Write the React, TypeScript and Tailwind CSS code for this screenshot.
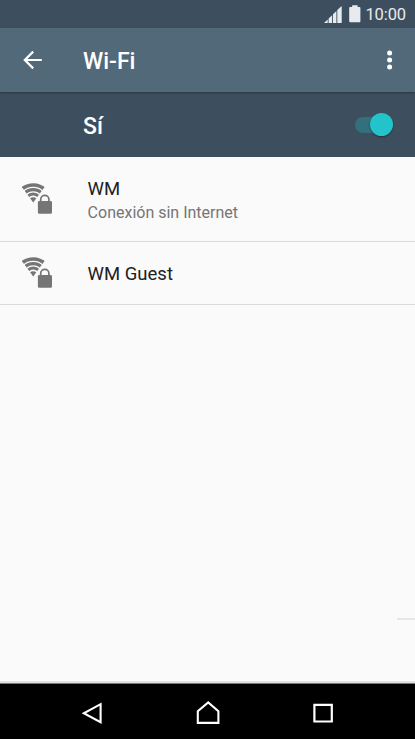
import type { ReactNode } from 'react';

interface Network {
  ssid: string;
  status?: string;
}

const NETWORKS: Network[] = [
  { ssid: 'WM', status: 'Conexión sin Internet' },
  { ssid: 'WM Guest' },
];

function StatusBar() {
  return (
    <div className="flex h-7 shrink-0 items-center justify-end bg-[#3d4f5e] pr-[9px] text-[#e8ebed]">
      <svg width="18" height="18" viewBox="0 0 18 18" className="mr-[7px]" fill="currentColor">
        <path d="M0 18 3.7 14.5V18ZM4.6 18V13.6L8.1 10.2V18ZM9 18V9.2L12.4 5.9V18ZM13.3 18V5L17.7 0.9V18Z" />
      </svg>
      <svg width="12" height="18" viewBox="0 0 12 18" className="mr-1" fill="currentColor">
        <path d="M3.2 0.3H8.6V1.9H10.4Q11.4 1.9 11.4 2.9V16.2Q11.4 17.2 10.4 17.2H1.2Q0.2 17.2 0.2 16.2V2.9Q0.2 1.9 1.2 1.9H3.2Z" />
      </svg>
      <span className="mt-[3px] text-[16.5px] leading-none tracking-[-0.1px]">10:00</span>
    </div>
  );
}

function Toolbar() {
  return (
    <header className="relative z-10 flex h-16 shrink-0 items-center bg-[#526979] text-white shadow-[0_1px_2px_rgba(0,0,0,0.35)]">
      <button className="ml-[23px] h-5 w-5" aria-label="Atrás">
        <svg width="20" height="20" viewBox="0 0 20 20" fill="none" stroke="currentColor" strokeWidth="2.2">
          <path d="M18.8 10H1.8M10.2 1.6 1.8 10 10.2 18.4" />
        </svg>
      </button>
      <h1 className="mt-[3px] ml-10 flex-1 text-[23px] leading-none font-medium">Wi-Fi</h1>
      <button className="mr-[22px] h-5 w-[6px]" aria-label="Más opciones">
        <svg width="6" height="20" viewBox="0 0 6 20" fill="currentColor">
          <circle cx="2.6" cy="3.1" r="2.5" />
          <circle cx="2.6" cy="10.1" r="2.5" />
          <circle cx="2.6" cy="17.1" r="2.5" />
        </svg>
      </button>
    </header>
  );
}

function WifiSwitch() {
  return (
    <div className="flex h-[65px] shrink-0 items-center justify-between bg-[#3d4f5e] pr-[22px] pl-[83px] text-white">
      <span className="mt-[3px] text-[23px] leading-none font-medium">Sí</span>
      <div role="switch" aria-checked="true" className="flex h-4 w-[38px] items-center justify-end rounded-full bg-[#346f7c]">
        <div className="h-[23px] w-[23px] shrink-0 rounded-full bg-[#22c3cb] shadow-[0_1px_2px_rgba(0,0,0,0.4)]" />
      </div>
    </div>
  );
}

function SecureWifiIcon() {
  return (
    <svg width="32" height="32" viewBox="0 0 32 32" className="shrink-0 text-[#757575]" fill="none" stroke="currentColor">
      <clipPath id="fan">
        <path d="M11.2 19.4-3.2 0H25.6Z" />
      </clipPath>
      <g clipPath="url(#fan)">
        <circle cx="11.2" cy="19" r="17" strokeWidth="3.7" />
        <circle cx="11.2" cy="19" r="12.3" strokeWidth="3.3" />
        <circle cx="11.2" cy="19" r="7.9" strokeWidth="3" />
        <circle cx="11.2" cy="19" r="4.8" fill="currentColor" stroke="none" />
      </g>
      <path d="M18.7 18.5V16.5a4.1 4.1 0 0 1 8.2 0V18.5" strokeWidth="1.7" />
      <rect x="15.9" y="17.9" width="14.1" height="12.9" rx="1.4" fill="currentColor" stroke="none" />
    </svg>
  );
}

function Row({ children, tall }: { children: ReactNode; tall: boolean }) {
  return (
    <li className={`flex items-center border-b border-[#dadada] pl-[22px] ${tall ? 'h-[85px]' : 'h-[63px]'}`}>
      {children}
    </li>
  );
}

function NetworkList() {
  return (
    <ul>
      {NETWORKS.map((n) => (
        <Row key={n.ssid} tall={Boolean(n.status)}>
          <SecureWifiIcon />
          <div className="mt-[2px] ml-[33.6px]">
            <p className="text-[18.5px] leading-[22px] text-[#212121]">{n.ssid}</p>
            {n.status && <p className="mt-[3px] text-base leading-5 text-[#757575]">{n.status}</p>}
          </div>
        </Row>
      ))}
    </ul>
  );
}

function NavBar() {
  return (
    <nav className="flex h-14 shrink-0 items-start justify-between border-t border-[#777777] bg-black px-20 pt-4 text-white">
      <svg width="24" height="24" viewBox="0 0 24 24" fill="none" stroke="currentColor" strokeWidth="2.1">
        <path d="M20.6 4.2V22.2L3.8 13.3Z" />
      </svg>
      <svg width="24" height="24" viewBox="0 0 24 24" fill="none" stroke="currentColor" strokeWidth="2.1">
        <path d="M1.8 22.9V11.2L12.2 2.4 22.4 11.2V22.9Z" />
      </svg>
      <svg width="24" height="24" viewBox="0 0 24 24" fill="none" stroke="currentColor" strokeWidth="2.2">
        <path d="M3.4 4.8H20.8V21.5H3.4Z" />
      </svg>
    </nav>
  );
}

export default function App() {
  return (
    <div className="flex h-[739px] w-[415px] flex-col overflow-hidden bg-[#fafafa] font-[Roboto,sans-serif]">
      <StatusBar />
      <Toolbar />
      <WifiSwitch />
      <main className="flex flex-1 flex-col justify-between border-b-2 border-[#e2e2e2]">
        <NetworkList />
        <div className="mb-[61px] ml-auto h-[2px] w-[18px] bg-[#e6e6e6]" />
      </main>
      <NavBar />
    </div>
  );
}
